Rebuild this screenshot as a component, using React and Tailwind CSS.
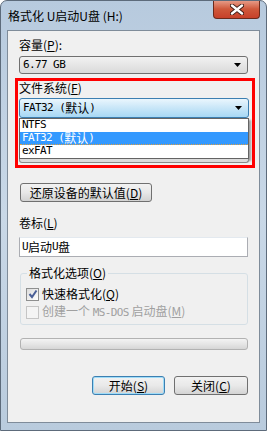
import React from "react";

const CJK = { fontFamily: '"Noto Sans CJK SC", "Noto Sans", sans-serif' };
const MONO = { fontFamily: '"DejaVu Sans Mono", "Liberation Mono", "Noto Sans CJK SC", monospace' };

function Arrow() {
  return (
    <svg width="8" height="5" viewBox="0 0 8 5" className="shrink-0">
      <path d="M0 0 H7 L3.5 4 Z" fill="#000" />
    </svg>
  );
}

function Mn({ k }) {
  return (
    <span>
      (<span className="underline underline-offset-1">{k}</span>)
    </span>
  );
}

function Fat() {
  return (
    <span className="flex items-center whitespace-pre">
      <span className="text-[11px] tracking-[-0.6px]" style={MONO}>FAT32 (</span>
      <span className="text-[12px] leading-[12px]" style={CJK}>默认</span>
      <span className="text-[11px] tracking-[-0.6px]" style={MONO}>)</span>
    </span>
  );
}

function Check({ checked, disabled }) {
  return (
    <div
      className={
        "w-[13px] h-[13px] border flex items-center justify-center shrink-0 " +
        (disabled
          ? "border-[#c5c5c5] bg-[#f4f4f4]"
          : "border-[#8e8f8f] bg-gradient-to-br from-[#dcdcdc] to-[#ffffff]")
      }
    >
      {checked && (
        <svg width="10" height="10" viewBox="0 0 10 10">
          <path d="M1.5 5 L4 8 L8.5 1.5" stroke="#4a5f97" strokeWidth="2" fill="none" />
        </svg>
      )}
    </div>
  );
}

export default function App() {
  return (
    <div
      className="w-[267px] h-[431px] flex flex-col overflow-hidden rounded-t-[7px] border border-[#5d6b7b] bg-gradient-to-b from-[#b7cade] via-[#c9d8e7] to-[#b9cbdd] text-[12px] text-black"
      style={CJK}
    >
      {/* title bar */}
      <div className="h-[29px] flex items-start pl-[7px] pr-[6px] shrink-0">
        <div className="flex-1 pt-[7px] leading-[16px] text-[12px]">格式化 U启动U盘 (H:)</div>
        <div className="w-[47px] h-[19px] -mt-px rounded-b-[4px] border border-[#6b2a1c] border-t-0 bg-gradient-to-b from-[#e8a18e] via-[#cf583b] to-[#c7402a] flex items-center justify-center">
          <svg width="14" height="11" viewBox="0 0 14 11">
            <path d="M2 1.5 L12 9.5 M12 1.5 L2 9.5" stroke="#3b1a14" strokeWidth="4.2" strokeLinecap="round" />
            <path d="M2 1.5 L12 9.5 M12 1.5 L2 9.5" stroke="#ffffff" strokeWidth="2.4" strokeLinecap="round" />
          </svg>
        </div>
      </div>

      {/* client area */}
      <div className="mx-[6px] h-[393px] shrink-0 border border-[#7f8c9a] bg-[#f0f0f0] flex flex-col">
        <div className="mt-[7px] ml-[11px] h-[14px] leading-[14px]">
          容量<Mn k="P" />:
        </div>
        <div className="mt-[4px] ml-[11px] w-[229px] h-[18px] rounded-[3px] border border-[#707070] bg-gradient-to-b from-[#f2f2f2] to-[#dadada] flex items-center justify-between pl-[3px] pr-[5px]">
          <span className="text-[11px] leading-[14px] tracking-[-0.6px]" style={MONO}>6.77 GB</span>
          <Arrow />
        </div>

        {/* highlighted group */}
        <div className="mt-[4px] ml-[7px] w-[240px] h-[90px] border-[3px] border-[#ff0000] flex flex-col pl-[1px]">
          <div className="h-[14px] leading-[14px]">
            文件系统<Mn k="F" />
          </div>
          <div className="mt-[3px] w-[230px] h-[20px] rounded-[3px] border border-[#3c7fb1] bg-gradient-to-b from-[#eaf6fd] via-[#c8e6f8] to-[#a7d8f4] flex items-center justify-between pl-[3px] pr-[5px]">
            <Fat />
            <Arrow />
          </div>
          <div className="w-[230px] h-[41px] border border-[#646464] bg-white shadow-[2px_2px_2px_rgba(0,0,0,0.35)] flex flex-col">
            <div className="h-[13px] flex items-center pl-[2px] text-[11px] tracking-[-0.6px]" style={MONO}>NTFS</div>
            <div className="h-[13px] flex items-center pl-[2px] bg-[#3399ff] text-white border-b border-dotted border-[#e0a040]">
              <Fat />
            </div>
            <div className="h-[13px] flex items-center pl-[2px] text-[11px] tracking-[-0.6px]" style={MONO}>exFAT</div>
          </div>
          <div className="w-[230px] h-[4px] rounded-b-[3px] border border-t-0 border-[#8a8a8a] bg-[#dcdcdc]" />
        </div>

        <div className="mt-[15px] ml-[12px] w-[132px] h-[19px] rounded-[3px] border border-[#707070] bg-gradient-to-b from-[#f2f2f2] via-[#e8e8e8] to-[#d2d2d2] flex items-center justify-center leading-[14px]">
          还原设备的默认值<Mn k="D" />
        </div>

        <div className="mt-[14px] ml-[11px] h-[14px] leading-[14px]">
          卷标<Mn k="L" />
        </div>
        <div className="mt-[7px] ml-[11px] w-[229px] h-[20px] border border-[#abadb3] border-t-[#e3e9ef] bg-white flex items-center pl-[2px] leading-[14px]">
          <span className="text-[11px] tracking-[-0.6px]" style={MONO}>U</span>启动<span className="text-[11px] tracking-[-0.6px]" style={MONO}>U</span>盘
        </div>

        <fieldset className="mt-[9px] ml-[12px] w-[228px] h-[59px] border border-[#d5dfe5] rounded-[3px] px-[5px] pb-[6px] flex flex-col">
          <legend className="px-[2px] ml-[1px] leading-[14px]">
            格式化选项<Mn k="O" />
          </legend>
          <div className="mt-[7px] flex items-center gap-[3px] h-[14px] leading-[14px]">
            <Check checked />
            <span>快速格式化<Mn k="Q" /></span>
          </div>
          <div className="mt-[4px] flex items-center gap-[3px] h-[14px] leading-[14px] text-[#a0a0a0]">
            <Check disabled />
            <span>
              创建一个 <span className="text-[11px] tracking-[-0.6px]" style={MONO}>MS-DOS</span> 启动盘<Mn k="M" />
            </span>
          </div>
        </fieldset>

        <div className="mt-[13px] ml-[12px] w-[228px] h-[12px] rounded-[3px] border border-[#b2b2b2] bg-gradient-to-b from-[#f3f3f3] via-[#e6e6e6] to-[#d6d6d6]" />

        <div className="mt-[26px] flex justify-end gap-[9px] pr-[11px]">
          <div className="w-[73px] h-[19px] rounded-[3px] border border-[#3c7fb1] bg-gradient-to-b from-[#f2f2f2] via-[#e9e9e9] to-[#d4d4d4] shadow-[inset_0_0_0_1px_#9fdcf8] flex items-center justify-center leading-[14px]">
            开始<Mn k="S" />
          </div>
          <div className="w-[74px] h-[19px] rounded-[3px] border border-[#707070] bg-gradient-to-b from-[#f2f2f2] via-[#e9e9e9] to-[#d4d4d4] flex items-center justify-center leading-[14px]">
            关闭<Mn k="C" />
          </div>
        </div>
      </div>
    </div>
  );
}
